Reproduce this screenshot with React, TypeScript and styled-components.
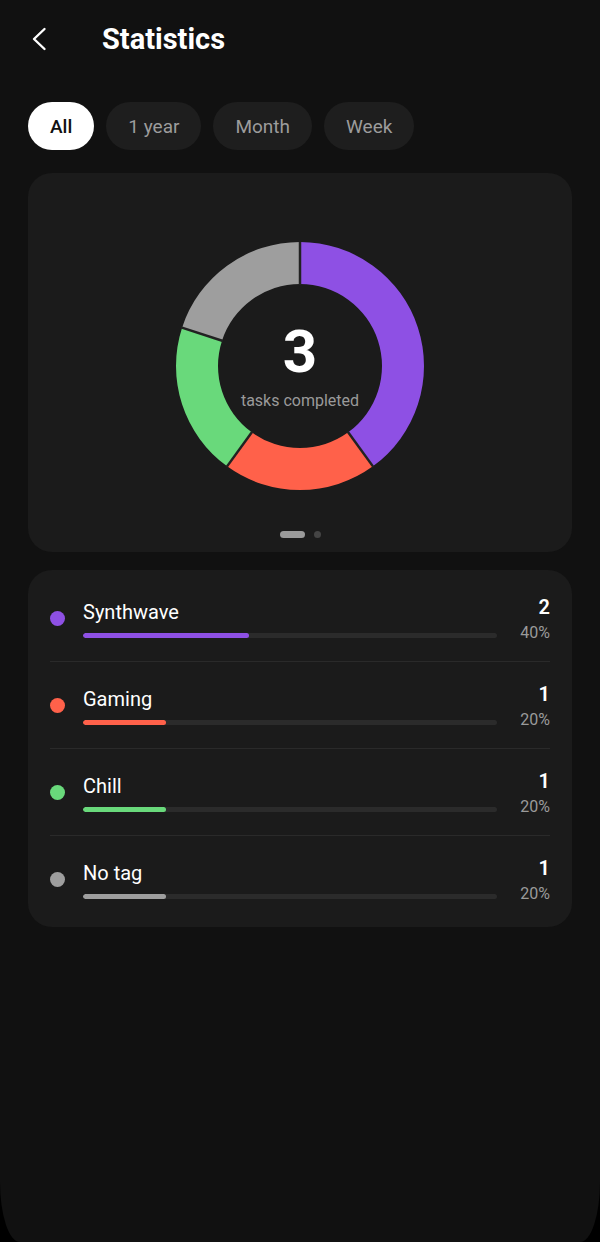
import * as React from "react";
import styled, { createGlobalStyle } from "styled-components";

const GlobalStyle = createGlobalStyle`
  html, body {
    margin: 0;
    padding: 0;
    background: #000;
  }
  body {
    font-family: Roboto, "Noto Sans", "Liberation Sans", sans-serif;
    -webkit-font-smoothing: antialiased;
  }
`;

const Screen = styled.div`
  width: 600px;
  height: 1242px;
  background: #111111;
  border-radius: 0 0 20px 20px / 0 0 60px 60px;
  box-sizing: border-box;
  padding: 0 28px;
  overflow: hidden;
  color: #fff;
`;

const Header = styled.header`
  display: flex;
  align-items: center;
  height: 78px;
  gap: 50px;
`;

const BackButton = styled.button`
  display: flex;
  align-items: center;
  justify-content: center;
  width: 24px;
  height: 24px;
  padding: 0;
  border: none;
  background: none;
  cursor: pointer;
`;

const Title = styled.h1`
  margin: 0;
  font-size: 29px;
  line-height: 34px;
  font-weight: 700;
`;

const Chips = styled.div`
  display: flex;
  gap: 12px;
  margin-top: 24px;
`;

const Chip = styled.button<{ $active?: boolean }>`
  height: 48px;
  padding: 0 22px;
  border: none;
  border-radius: 24px;
  font-family: inherit;
  font-size: 19px;
  font-weight: ${(p) => (p.$active ? 500 : 400)};
  background: ${(p) => (p.$active ? "#ffffff" : "#1e1e1e")};
  color: ${(p) => (p.$active ? "#111" : "#9c9c9c")};
`;

const Card = styled.section`
  background: #1b1b1b;
  border-radius: 24px;
`;

const ChartCard = styled(Card)`
  margin-top: 23px;
  padding: 69px 0 14px;
  display: flex;
  flex-direction: column;
  align-items: center;
`;

const DonutWrap = styled.div`
  position: relative;
  width: 248px;
  height: 248px;
`;

const DonutLabel = styled.div`
  position: absolute;
  inset: 0;
  display: flex;
  flex-direction: column;
  align-items: center;
  justify-content: center;
  padding-bottom: 2px;
`;

const Total = styled.div`
  font-size: 60px;
  line-height: 64px;
  font-weight: 700;
`;

const Caption = styled.div`
  font-size: 16px;
  line-height: 20px;
  color: #9a9a9a;
  margin-top: 7px;
`;

const Pager = styled.div`
  display: flex;
  align-items: center;
  gap: 9px;
  margin-top: 41px;
`;

const PagerDot = styled.span<{ $active?: boolean }>`
  display: block;
  height: 7px;
  width: ${(p) => (p.$active ? "25px" : "7px")};
  border-radius: 4px;
  background: ${(p) => (p.$active ? "#9a9a9a" : "#444")};
`;

const ListCard = styled(Card)`
  margin-top: 18px;
  padding: 5px 22px;
`;

const Row = styled.div`
  display: grid;
  grid-template-columns: 15px 1fr 53px;
  align-items: start;
  padding: 20px 0 18px;
  border-bottom: 1px solid #2a2a2a;
  &:last-child {
    border-bottom: none;
  }
`;

const Dot = styled.span<{ $color: string }>`
  width: 15px;
  height: 15px;
  border-radius: 50%;
  margin-top: 16px;
  background: ${(p) => p.$color};
`;

const Main = styled.div`
  margin-left: 18px;
  padding-top: 5px;
`;

const Name = styled.div`
  font-size: 20px;
  line-height: 24px;
  font-weight: 400;
`;

const Track = styled.div`
  height: 5px;
  margin-top: 9px;
  border-radius: 3px;
  background: #2b2b2b;
  overflow: hidden;
`;

const Fill = styled.div<{ $color: string }>`
  height: 100%;
  border-radius: 3px;
  background: ${(p) => p.$color};
`;

const Side = styled.div`
  text-align: right;
`;

const Count = styled.div`
  font-size: 20px;
  line-height: 24px;
  font-weight: 600;
`;

const Percent = styled.div`
  font-size: 16px;
  line-height: 20px;
  color: #9a9a9a;
  margin-top: 4px;
`;

type Tag = { name: string; color: string; count: number };

const tags: Tag[] = [
  { name: "Synthwave", color: "#8e50e4", count: 2 },
  { name: "Gaming", color: "#ff614a", count: 1 },
  { name: "Chill", color: "#69d97b", count: 1 },
  { name: "No tag", color: "#9e9e9e", count: 1 },
];

const share = tags.reduce((s, t) => s + t.count, 0);
const completed = 3;
const periods = ["All", "1 year", "Month", "Week"];

const point = (c: number, r: number, deg: number) => {
  const a = (deg * Math.PI) / 180;
  return [c + r * Math.sin(a), c - r * Math.cos(a)];
};

// Кольцевая диаграмма по тегам, сегменты по часовой стрелке от 12 часов
const Donut: React.FC = () => {
  const size = 248;
  const c = size / 2;
  const R = 124;
  const r = 82;
  let start = 0;
  const segments = tags.map((t) => {
    const sweep = (t.count / share) * 360;
    const a0 = start;
    const a1 = start + sweep;
    start = a1;
    const large = sweep > 180 ? 1 : 0;
    const [ox0, oy0] = point(c, R, a0);
    const [ox1, oy1] = point(c, R, a1);
    const [ix1, iy1] = point(c, r, a1);
    const [ix0, iy0] = point(c, r, a0);
    const d = `M${ox0} ${oy0} A${R} ${R} 0 ${large} 1 ${ox1} ${oy1} L${ix1} ${iy1} A${r} ${r} 0 ${large} 0 ${ix0} ${iy0} Z`;
    return { d, color: t.color, a0 };
  });

  return (
    <svg width={size} height={size} viewBox={`0 0 ${size} ${size}`}>
      {segments.map((s) => (
        <path key={s.a0} d={s.d} fill={s.color} />
      ))}
      {segments.map((s) => {
        const [x0, y0] = point(c, r - 1, s.a0);
        const [x1, y1] = point(c, R + 1, s.a0);
        return <line key={`l${s.a0}`} x1={x0} y1={y0} x2={x1} y2={y1} stroke="#222" strokeWidth={2.5} />;
      })}
    </svg>
  );
};

const App: React.FC = () => {
  const [period, setPeriod] = React.useState("All");

  return (
    <Screen>
      <GlobalStyle />
      <Header>
        <BackButton aria-label="Back">
          <svg width="24" height="24" viewBox="0 0 24 24" fill="none">
            <path d="M16.5 2 L6 12 L16.5 22" stroke="#fff" strokeWidth="2.4" strokeLinecap="round" strokeLinejoin="round" />
          </svg>
        </BackButton>
        <Title>Statistics</Title>
      </Header>

      <Chips>
        {periods.map((p) => (
          <Chip key={p} $active={p === period} onClick={() => setPeriod(p)}>
            {p}
          </Chip>
        ))}
      </Chips>

      <ChartCard>
        <DonutWrap>
          <Donut />
          <DonutLabel>
            <Total>{completed}</Total>
            <Caption>tasks completed</Caption>
          </DonutLabel>
        </DonutWrap>
        <Pager>
          <PagerDot $active />
          <PagerDot />
        </Pager>
      </ChartCard>

      <ListCard>
        {tags.map((t) => {
          const pct = Math.round((t.count / share) * 100);
          return (
            <Row key={t.name}>
              <Dot $color={t.color} />
              <Main>
                <Name>{t.name}</Name>
                <Track>
                  <Fill $color={t.color} style={{ width: `${pct}%` }} />
                </Track>
              </Main>
              <Side>
                <Count>{t.count}</Count>
                <Percent>{pct}%</Percent>
              </Side>
            </Row>
          );
        })}
      </ListCard>
    </Screen>
  );
};

export default App;
